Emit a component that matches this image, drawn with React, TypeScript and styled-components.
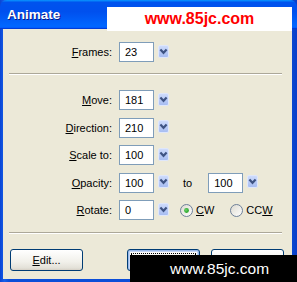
import React from 'react';
import styled, { createGlobalStyle } from 'styled-components';

const GlobalStyle = createGlobalStyle`
    html, body {
        margin: 0;
        padding: 0;
        background: #ffffff;
    }
    body {
        font-family: "Liberation Sans", Arial, sans-serif;
        font-size: 11px;
        color: #000000;
    }
`;

const Window = styled.div`
    position: relative;
    width: 297px;
    height: 282px;
    display: flex;
    flex-direction: column;
    overflow: hidden;
    background: linear-gradient(90deg, #0a44d4 0%, #1660ea 1.5%, #0b4ed8 3%, #0b4ed8 97%, #0a3ec8 100%);
`;

const TitleBar = styled.div`
    height: 29px;
    flex: none;
    display: flex;
    align-items: center;
    padding-left: 7px;
    border-radius: 7px 7px 0 0;
    background: linear-gradient(
        180deg,
        #0997ff,
        #0053ee 8%,
        #0050ee 40%,
        #0066ff 88%,
        #0066ff 93%,
        #005bff 95%,
        #003dd7 96%,
        #003dd7
    );
`;

const Title = styled.span`
    font-family: "Liberation Sans", Arial, sans-serif;
    font-weight: bold;
    font-size: 13.5px;
    color: #ffffff;
    text-shadow: 1px 1px 0 #0a1883;
`;

const Body = styled.div`
    flex: 1;
    margin: 0 5px 3px 3px;
    background: #ece9d8;
    display: flex;
    flex-direction: column;
`;

const Section = styled.div<{ $top: number }>`
    display: flex;
    flex-direction: column;
    gap: 7.5px;
    padding-top: ${p => p.$top}px;
`;

const Separator = styled.div<{ $top: number }>`
    margin: ${p => p.$top}px 10px 0 6px;
    height: 1px;
    background: #aca899;
    border-bottom: 1px solid #ffffff;
`;

const Row = styled.div`
    display: flex;
    align-items: center;
    height: 20px;
`;

const Label = styled.span`
    width: 109px;
    text-align: right;
    white-space: nowrap;
`;

const Key = styled.span`
    text-decoration: underline;
`;

const Field = styled.div<{ $gap?: number }>`
    box-sizing: border-box;
    width: 35px;
    height: 20px;
    margin-left: ${p => p.$gap ?? 7}px;
    padding-left: 5px;
    display: flex;
    align-items: center;
    background: #ffffff;
    border: 1px solid #7f9db9;
`;

const DropButton = styled.span`
    display: inline-flex;
    margin-left: 4px;
    margin-top: -2px;
`;

const Plain = styled.span<{ $gap: number }>`
    margin-left: ${p => p.$gap}px;
`;

const Radio = styled.label<{ $gap: number }>`
    display: inline-flex;
    align-items: center;
    gap: 3px;
    margin-left: ${p => p.$gap}px;
`;

const ButtonRow = styled.div`
    display: flex;
    justify-content: space-between;
    margin: 15px 8px 0 7px;
`;

const ButtonGroup = styled.div`
    display: flex;
    gap: 11px;
`;

const Button = styled.div<{ $default?: boolean }>`
    box-sizing: border-box;
    width: 73px;
    height: 22px;
    display: flex;
    align-items: center;
    justify-content: center;
    border: 1px solid #003c74;
    border-radius: 3px;
    background: linear-gradient(180deg, #ffffff, #f1f0ea 60%, #e3e1d8 90%, #d6d0c5);
    box-shadow: ${p => (p.$default ? 'inset 0 0 0 1px #98b8ea, inset 0 0 0 2px #c4d6f5' : 'none')};
    position: relative;
    &::after {
        content: '';
        display: ${p => (p.$default ? 'block' : 'none')};
        position: absolute;
        inset: 3px;
        border: 1px dotted #000000;
    }
`;

const TopMark = styled.div`
    position: absolute;
    left: 107px;
    top: 7px;
    width: 185px;
    height: 24px;
    background: #ffffff;
    display: flex;
    align-items: center;
    justify-content: center;
    font-family: "Liberation Sans", Arial, sans-serif;
    font-weight: bold;
    font-size: 16px;
    color: #ff0000;
`;

const BottomMark = styled.div`
    position: absolute;
    left: 130px;
    top: 255px;
    right: 0;
    bottom: 0;
    background: #000000;
    display: flex;
    align-items: center;
    padding-left: 40px;
    font-family: "Liberation Sans", Arial, sans-serif;
    font-size: 15.5px;
    color: #ffffff;
`;

const Arrow = () => (
    <DropButton>
        <svg width="11" height="13" viewBox="0 0 11 13">
            <defs>
                <linearGradient id="arrowFill" x1="0" y1="0" x2="0" y2="1">
                    <stop offset="0" stopColor="#cfdcfc" />
                    <stop offset="1" stopColor="#a6bcf1" />
                </linearGradient>
            </defs>
            <rect x="0.5" y="0.5" width="10" height="12" rx="1.5" fill="url(#arrowFill)" stroke="#dfe7fb" />
            <path d="M2.4 4.6 L5.5 7.8 L8.6 4.6" stroke="#3f5484" strokeWidth="2.2" fill="none" />
        </svg>
    </DropButton>
);

const RadioDot = ({ checked }: { checked?: boolean }) => (
    <svg width="13" height="13" viewBox="0 0 13 13">
        <defs>
            <linearGradient id="radioFill" x1="0" y1="0" x2="1" y2="1">
                <stop offset="0" stopColor="#dcd9cf" />
                <stop offset="1" stopColor="#ffffff" />
            </linearGradient>
            <radialGradient id="radioDot" cx="0.4" cy="0.4" r="0.6">
                <stop offset="0" stopColor="#6ed36e" />
                <stop offset="1" stopColor="#21a121" />
            </radialGradient>
        </defs>
        <circle cx="6.5" cy="6.5" r="6" fill="url(#radioFill)" stroke="#6d7f98" />
        {checked && <circle cx="6.5" cy="6.5" r="2.4" fill="url(#radioDot)" />}
    </svg>
);

const App = () => (
    <>
        <GlobalStyle />
        <Window>
            <TitleBar>
                <Title>Animate</Title>
            </TitleBar>
            <Body>
                <Section $top={13}>
                    <Row>
                        <Label>
                            <Key>F</Key>rames:
                        </Label>
                        <Field>23</Field>
                        <Arrow />
                    </Row>
                </Section>
                <Separator $top={11} />
                <Section $top={15}>
                    <Row>
                        <Label>
                            <Key>M</Key>ove:
                        </Label>
                        <Field>181</Field>
                        <Arrow />
                    </Row>
                    <Row>
                        <Label>
                            <Key>D</Key>irection:
                        </Label>
                        <Field>210</Field>
                        <Arrow />
                    </Row>
                    <Row>
                        <Label>
                            <Key>S</Key>cale to:
                        </Label>
                        <Field>100</Field>
                        <Arrow />
                    </Row>
                    <Row>
                        <Label>
                            <Key>O</Key>pacity:
                        </Label>
                        <Field>100</Field>
                        <Arrow />
                        <Plain $gap={14}>to</Plain>
                        <Field $gap={16}>100</Field>
                        <Arrow />
                    </Row>
                    <Row>
                        <Label>
                            <Key>R</Key>otate:
                        </Label>
                        <Field>0</Field>
                        <Arrow />
                        <Radio $gap={11}>
                            <RadioDot checked />
                            <span>
                                <Key>C</Key>W
                            </span>
                        </Radio>
                        <Radio $gap={16}>
                            <RadioDot />
                            <span>
                                CC<Key>W</Key>
                            </span>
                        </Radio>
                    </Row>
                </Section>
                <Separator $top={12} />
                <ButtonRow>
                    <Button>
                        <span>
                            <Key>E</Key>dit...
                        </span>
                    </Button>
                    <ButtonGroup>
                        <Button $default>OK</Button>
                        <Button>Cancel</Button>
                    </ButtonGroup>
                </ButtonRow>
            </Body>
            <TopMark>www.85jc.com</TopMark>
            <BottomMark>www.85jc.com</BottomMark>
        </Window>
    </>
);

export default App;
